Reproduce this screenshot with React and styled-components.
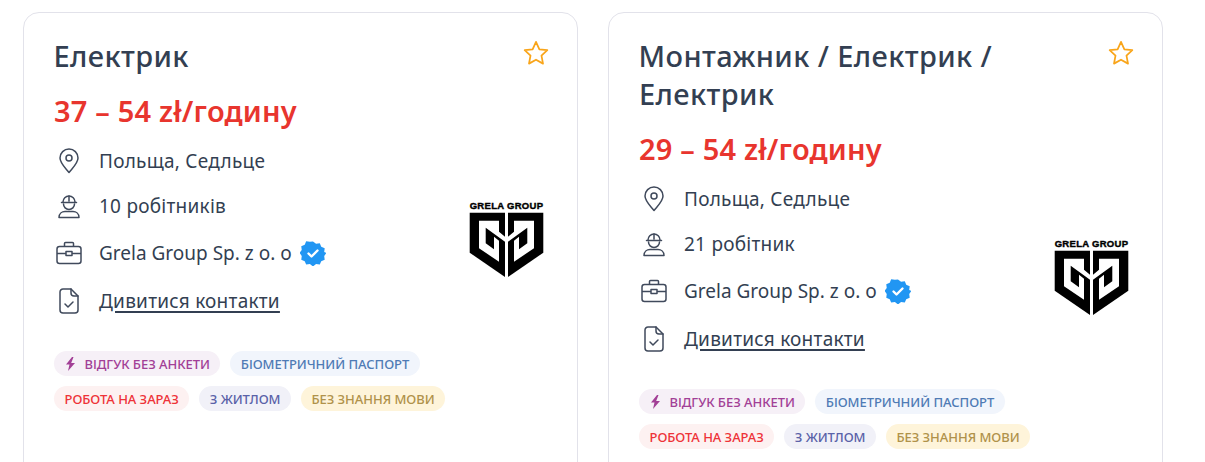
import React from 'react';
import styled, { createGlobalStyle } from 'styled-components';

const GlobalStyle = createGlobalStyle`
  html, body {
    margin: 0;
    height: 462px;
    overflow: hidden;
    background: #fff;
  }
  * { box-sizing: border-box; }
`;

const Page = styled.div`
  display: flex;
  align-items: flex-start;
  gap: 30px;
  padding: 12px 0 0 23px;
  font-family: "Noto Sans", "Open Sans", sans-serif;
`;

const Card = styled.article`
  position: relative;
  flex: none;
  width: 555px;
  height: 470px;
  padding: 24px 30px 0;
  background: #fff;
  border: 1px solid #e2e2ea;
  border-radius: 16px;
`;

const Title = styled.h2`
  margin: 0;
  max-width: 400px;
  font-size: 29px;
  line-height: 38px;
  letter-spacing: 0.4px;
  font-weight: 500;
  color: #333f52;
  text-indent: -0.5px;
`;

const Salary = styled.div`
  margin-top: 17px;
  font-size: 29px;
  line-height: 38px;
  letter-spacing: 0.2px;
  font-weight: 600;
  color: #e8352e;
`;

const FavButton = styled.button`
  position: absolute;
  top: 26px;
  right: 27px;
  padding: 0;
  display: flex;
  border: 0;
  background: none;
  color: #f9a51a;
`;

const InfoList = styled.div`
  position: relative;
  margin-top: 8px;
  display: flex;
  flex-direction: column;
`;

const InfoRow = styled.div`
  display: flex;
  align-items: center;
  gap: 15px;
  height: ${(p) => p.$h}px;
  font-size: 19px;
  letter-spacing: 0.25px;
  color: #333f52;
`;

const IconSlot = styled.span`
  display: flex;
  justify-content: center;
  width: 30px;
  color: #404a5c;
`;

const CompanyName = styled.span`
  letter-spacing: 0;
`;

const ContactLink = styled.a`
  color: #333f52;
  text-decoration: underline;
  text-decoration-thickness: 1.5px;
  text-underline-offset: 3px;
  cursor: pointer;
`;

const Verified = styled.span`
  display: flex;
  margin-left: -7px;
`;

const LogoBox = styled.div`
  position: absolute;
  right: 2px;
  top: 62px;
  display: flex;
  width: 76px;
`;

const Tags = styled.div`
  margin-top: 28px;
  display: flex;
  flex-wrap: wrap;
  gap: 10px;
  max-width: 480px;
`;

const Tag = styled.span`
  display: inline-flex;
  align-items: center;
  gap: 9px;
  height: 25px;
  padding: 0 10.5px;
  border-radius: 13px;
  font-size: 13px;
  font-weight: 500;
  letter-spacing: -0.05px;
  white-space: nowrap;
  color: ${(p) => p.$fg};
  background: ${(p) => p.$bg};
`;

const PinIcon = () => (
  <svg width="22" height="26" viewBox="0 0 22 26" fill="none" stroke="currentColor" strokeWidth="1.5">
    <path d="M11 24.5C7 19.5 2 15 2 10a9 9 0 0 1 18 0c0 5-5 9.500-9 14.500Z" strokeLinejoin="round" />
    <circle cx="11" cy="10" r="3" />
  </svg>
);

const WorkerIcon = () => (
  <svg width="26" height="26" viewBox="0 0 26 26" fill="none" stroke="currentColor" strokeWidth="1.5" strokeLinecap="round" strokeLinejoin="round">
    <path d="M7 9a6 6 0 0 1 12 0" />
    <path d="M13 3v5M5.500 9.500h15" />
    <path d="M7.500 11a5.500 5.500 0 0 0 11 0" />
    <path d="M3 24.500c0-4 3-6 6-6h8c3 0 6 2 6 6Z" />
  </svg>
);

const CaseIcon = () => (
  <svg width="26" height="24" viewBox="0 0 26 24" fill="none" stroke="currentColor" strokeWidth="1.5" strokeLinejoin="round">
    <rect x="1" y="5.500" width="24" height="17" rx="2.500" />
    <path d="M8.500 5.500V2.500a1 1 0 0 1 1-1h7a1 1 0 0 1 1 1v3" />
    <path d="M1 12.500h9M16 12.500h9" />
    <rect x="10" y="10.500" width="6" height="4" />
  </svg>
);

const DocIcon = () => (
  <svg width="20" height="26" viewBox="0 0 20 26" fill="none" stroke="currentColor" strokeWidth="1.5" strokeLinecap="round" strokeLinejoin="round">
    <path d="M4 1h8l7 7v14a3 3 0 0 1-3 3H4a3 3 0 0 1-3-3V4a3 3 0 0 1 3-3Z" />
    <path d="M12 1v4a3 3 0 0 0 3 3h4" />
    <path d="m6 16 3 3 5-5" />
  </svg>
);

const VerifiedIcon = () => (
  <svg width="26" height="26" viewBox="0 0 26 26">
    <path
      fill="#2196f3"
      d="M13 1l3.200 2.400 3.900-.5 1.500 3.600 3.600 1.500-.5 3.900L27 13l-2.300 3.100.5 3.900-3.600 1.500-1.500 3.600-3.900-.5L13 27l-3.200-2.400-3.900.5-1.500-3.600-3.600-1.500.5-3.900L-1 13l2.300-3.100-.5-3.900 3.600-1.500 1.500-3.600 3.900.5Z"
      transform="translate(.5 .5) scale(.96)"
    />
    <path d="m8.500 13.500 3 3 6-6" fill="none" stroke="#fff" strokeWidth="2.400" strokeLinecap="round" strokeLinejoin="round" />
  </svg>
);

const StarIcon = () => (
  <svg width="28" height="28" viewBox="0 0 24 24" fill="none" stroke="currentColor" strokeWidth="1.500" strokeLinejoin="round">
    <path d="m12 2.500 2.900 6.300 6.800.8-5 4.700 1.300 6.800-6-3.400-6 3.400 1.300-6.800-5-4.700 6.800-.8Z" />
  </svg>
);

const BoltIcon = () => (
  <svg width="11" height="14" viewBox="0 0 11 14" fill="currentColor">
    <path d="M7 0 1 7.500h3.500L3 14l7-8H6.200L8.500 0Z" />
  </svg>
);

const ShieldHalf = (props) => (
  <g {...props}>
    <path d="M.7 12.700H36V77L.7 52.700Z" />
    <path fill="#fff" d="M10 20.700h20v11l6 5v5L16.700 27.700v15.600l8.300 6V36.700l5 4v21L10 48.300Z" />
  </g>
);

const GrelaLogo = () => (
  <svg width="76" height="78" viewBox="0 0 76 78">
    <text x="37.500" y="8.500" textAnchor="middle" fontFamily="Liberation Sans" fontSize="9.500" fontWeight="700" letterSpacing="0.300" stroke="#000" strokeWidth="0.400">GRELA GROUP</text>
    <ShieldHalf />
    <ShieldHalf transform="matrix(-1 0 0 1 75 0)" />
  </svg>
);

const tags = [
  { text: 'ВІДГУК БЕЗ АНКЕТИ', fg: '#a23f96', bg: '#f6f0f7', bolt: true },
  { text: 'БІОМЕТРИЧНИЙ ПАСПОРТ', fg: '#4f7bb5', bg: '#f1f5fc' },
  { text: 'РОБОТА НА ЗАРАЗ', fg: '#ee3338', bg: '#fdf1f1' },
  { text: 'З ЖИТЛОМ', fg: '#5a62a8', bg: '#f1f1f8' },
  { text: 'БЕЗ ЗНАННЯ МОВИ', fg: '#b0924a', bg: '#fef4da' },
];

const jobs = [
  { title: 'Електрик', salary: '37 – 54 zł/годину', workers: '10 робітників' },
  { title: 'Монтажник / Електрик / Електрик', salary: '29 – 54 zł/годину', workers: '21 робітник' },
];

function JobCard({ job }) {
  return (
    <Card>
      <Title>{job.title}</Title>
      <FavButton><StarIcon /></FavButton>
      <Salary>{job.salary}</Salary>
      <InfoList>
        <InfoRow $h={45}><IconSlot><PinIcon /></IconSlot>Польща, Седльце</InfoRow>
        <InfoRow $h={45}><IconSlot><WorkerIcon /></IconSlot>{job.workers}</InfoRow>
        <InfoRow $h={50}>
          <IconSlot><CaseIcon /></IconSlot>
          <CompanyName>Grela Group Sp. z o. o</CompanyName>
          <Verified><VerifiedIcon /></Verified>
        </InfoRow>
        <InfoRow $h={45}><IconSlot><DocIcon /></IconSlot><ContactLink>Дивитися контакти</ContactLink></InfoRow>
        <LogoBox><GrelaLogo /></LogoBox>
      </InfoList>
      <Tags>
        {tags.map((t) => (
          <Tag key={t.text} $fg={t.fg} $bg={t.bg}>
            {t.bolt && <BoltIcon />}
            {t.text}
          </Tag>
        ))}
      </Tags>
    </Card>
  );
}

export default function App() {
  return (
    <>
      <GlobalStyle />
      <Page>
        {jobs.map((job) => <JobCard key={job.title} job={job} />)}
      </Page>
    </>
  );
}
